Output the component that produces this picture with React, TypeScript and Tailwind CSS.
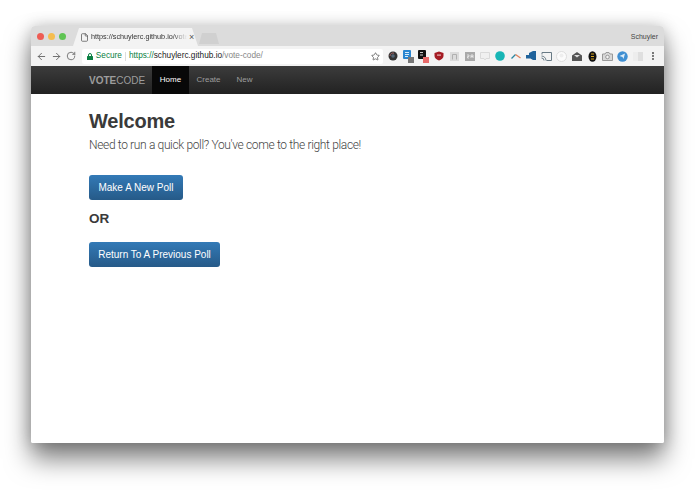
import { ArrowLeft, ArrowRight, RotateCw, Star, File, MoreVertical } from "lucide-react";

const sans = "font-['Liberation_Sans',Arial,sans-serif]";

const extensions = [
    <svg key="1" width="10" height="10" viewBox="0 0 10 10"><circle cx="5" cy="5" r="4.500" fill="#333" /><path d="M2 5a3 3 0 0 1 4-2.800" stroke="#a66" fill="none" /><circle cx="5" cy="5" r="1.800" fill="#567" /></svg>,
    <svg key="2" width="13" height="13" viewBox="0 0 13 13"><rect x="1" y="0" width="8" height="9" rx="1" fill="#2a86d1" /><path d="M3 2.500h4M3 4.500h4M3 6.500h3" stroke="#d8ecfa" /><rect x="6" y="7" width="6" height="6" fill="#777" /></svg>,
    <svg key="3" width="13" height="13" viewBox="0 0 13 13"><rect x="1" y="0" width="8" height="9" rx="1" fill="#111" /><path d="M3 2.500h3M3 5h3" stroke="#ccc" /><rect x="6" y="7" width="6" height="6" fill="#e86a6a" /></svg>,
    <svg key="4" width="10" height="10" viewBox="0 0 10 10"><path d="M5 .5 9.500 2v3c0 2.300-2.200 3.800-4.500 4.500C2.700 8.800.5 7.300.5 5V2z" fill="#a51c24" /><rect x="3" y="3.500" width="4" height="1.200" fill="#e8b5b5" /></svg>,
    <svg key="5" width="9" height="9" viewBox="0 0 9 9"><rect x="0" y="0" width="9" height="9" fill="#dcdcdc" /><path d="M2.500 7.500v-5h4v5" stroke="#b0b0b0" fill="none" /></svg>,
    <svg key="6" width="10" height="9" viewBox="0 0 10 9"><rect x="0" y="0" width="10" height="9" fill="#a9a9a9" /><path d="M2 3h2v1.500H2.500V6H4M6 6V3h2v3M6 4.500h2" stroke="#eee" strokeWidth=".8" fill="none" /></svg>,
    <svg key="7" width="10" height="9" viewBox="0 0 10 9"><path d="M.5 .5h9v6H6L5 8 4 6.500H.5z" fill="#f0f0f0" stroke="#dadada" /></svg>,
    <svg key="8" width="10" height="10" viewBox="0 0 10 10"><circle cx="5" cy="5" r="4.800" fill="#17b5b5" /></svg>,
    <svg key="9" width="10" height="8" viewBox="0 0 10 8"><path d="M.5 6.500 4.500 2.500" stroke="#2a86a1" strokeWidth="1.300" fill="none" /><path d="M4.500 2.500 9.500 6" stroke="#e0805a" strokeWidth="1.300" fill="none" /></svg>,
    <svg key="10" width="10" height="10" viewBox="0 0 10 10"><path d="M0 4h3V2l4-2h3v9H7L4.500 7.500H0z" fill="#20639b" /></svg>,
    <svg key="11" width="11" height="9" viewBox="0 0 11 9"><path d="M1 2.500V.5h9.500v8H5.500" stroke="#687a85" fill="none" /><path d="M.5 4a4.500 4.500 0 0 1 4.500 4.500M.5 6a2.500 2.500 0 0 1 2.500 2.500" stroke="#687a85" fill="none" /></svg>,
    <svg key="12" width="11" height="11" viewBox="0 0 11 11"><circle cx="5.500" cy="5.500" r="5" fill="#fbfbfb" stroke="#dddddd" /><circle cx="5.500" cy="4.500" r="2" fill="#eeeeee" /></svg>,
    <svg key="13" width="10" height="9" viewBox="0 0 10 9"><path d="M0 3.500 5 0l5 3.500V9H0z" fill="#555" /><path d="M2 3h6L5 5.500z" fill="#ddd" /></svg>,
    <svg key="14" width="9" height="11" viewBox="0 0 9 11"><ellipse cx="4.500" cy="5.500" rx="4" ry="5.200" fill="#111" /><path d="M3 3h3M3 5.500h3M3 8h3" stroke="#d9a520" /></svg>,
    <svg key="15" width="11" height="9" viewBox="0 0 11 9"><path d="M.5 2h2.500l1-1.500h3L8 2h2.500v6.500H.5z" fill="#d8d8d8" stroke="#999" /><circle cx="5.500" cy="5" r="1.800" fill="#f3f3f3" stroke="#999" /></svg>,
    <svg key="16" width="11" height="11" viewBox="0 0 11 11"><circle cx="5.500" cy="5.500" r="5.200" fill="#3f8fd2" /><path d="M2.500 5 8 2.500 6.500 8l-1-2z" fill="#dcecf8" /></svg>,
    <svg key="17" width="10" height="9" viewBox="0 0 10 9"><rect width="10" height="9" fill="#ededed" /><rect x="5" width="5" height="9" fill="#dfdfdf" /></svg>,
    <MoreVertical key="18" size={10} color="#555555" strokeWidth={3} />,
];

const App = () => {
    return (
        <div className={`h-[494px] w-[695px] overflow-hidden bg-white pl-[31px] pt-[26px] ${sans}`}>
            <div className="flex h-[417px] w-[633px] flex-col overflow-hidden rounded-t-[4px] rounded-b-[2px] bg-white shadow-[0_16px_26px_rgba(0,0,0,0.5),0_0_16px_rgba(0,0,0,0.2)]">
                {/* tab strip */}
                <div className="flex h-[20px] items-end bg-[#dcdcdc] pl-[6px]">
                    <div className="mr-[7px] flex h-[14px] items-center gap-[4px] self-center">
                        <span className="h-[7px] w-[7px] rounded-full bg-[#ee5c54]" />
                        <span className="h-[7px] w-[7px] rounded-full bg-[#f5bd4f]" />
                        <span className="h-[7px] w-[7px] rounded-full bg-[#5fc453]" />
                    </div>
                    <div className="flex h-[18px] w-[125px] items-center bg-[#f3f3f3] pl-[7px] [clip-path:polygon(0_100%,6px_0,119px_0,100%_100%)]">
                        <File size={9} color="#555555" />
                        <span className="ml-[2px] w-[96px] whitespace-nowrap text-[7.250px] leading-[10px] text-[#333333] [mask-image:linear-gradient(to_right,black_85%,transparent)]">https://schuylerc.github.io/vote</span>
                        <span className="ml-[2px] text-[9px] leading-none text-[#555555]">×</span>
                    </div>
                    <div className="mb-[2px] ml-[1px] h-[11px] w-[20px] bg-[#d0d0d0] [clip-path:polygon(0_100%,3px_0,17px_0,100%_100%)]" />
                    <span className="ml-auto mr-[6px] self-center text-[7px] leading-none text-[#444444]">Schuyler</span>
                </div>
                {/* toolbar */}
                <div className="flex h-[20px] items-center bg-[#f3f3f3] pl-[5px] pr-[3px]">
                    <div className="flex w-[46px] gap-[4px]">
                        <ArrowLeft size={11} color="#666666" />
                        <ArrowRight size={11} color="#666666" />
                        <RotateCw size={10} color="#666666" />
                    </div>
                    <div className="flex h-[15px] w-[302px] items-center rounded-[2px] bg-white pl-[5px] pr-[3px] text-[8.250px] leading-none">
                        <svg width="6" height="7" viewBox="0 0 6 7"><path d="M1.500 3V2a1.500 1.500 0 0 1 3 0v1" stroke="#0b8043" fill="none" /><rect y="3" width="6" height="4" rx=".5" fill="#0b8043" /></svg>
                        <span className="ml-[3px] text-[#0b8043]">Secure</span>
                        <span className="mx-[3px] h-[9px] w-px bg-[#dddddd]" />
                        <span className="text-[#0b8043]">https://</span>
                        <span className="text-[#222222]">schuylerc.github.io</span>
                        <span className="text-[#888888]">/vote-code/</span>
                        <Star size={9} color="#555555" className="ml-auto" />
                    </div>
                    <div className="flex flex-1 pl-[3px]">
                        {extensions.map((icon, index) => (
                            <span key={index} className="flex w-[15.3px] shrink-0 items-center justify-center">
                                {icon}
                            </span>
                        ))}
                    </div>
                </div>
                {/* navbar */}
                <div className="flex h-[28px] items-stretch bg-gradient-to-b from-[#3c3c3c] to-[#222222] pl-[58px]">
                    <span className="mr-[9px] flex w-[54px] items-center text-[10px] text-[#9d9d9d]">
                        <b>VOTE</b>CODE
                    </span>
                    <span className="flex w-[37px] items-center justify-center bg-[#080808] text-[8px] text-white">Home</span>
                    <span className="flex w-[39px] items-center justify-center text-[8px] text-[#9d9d9d]">Create</span>
                    <span className="flex w-[33px] items-center justify-center text-[8px] text-[#9d9d9d]">New</span>
                </div>
                {/* page */}
                <div className="flex-1 bg-white pl-[58px] pt-[14px] text-[#3a3a3a]">
                    <h1 className="text-[20px] font-bold leading-[26px] tracking-[-0.2px]">Welcome</h1>
                    <p className="mt-[3px] font-['Roboto',sans-serif] text-[12px] font-light leading-[16px] tracking-[-0.35px] text-[#444444]">Need to run a quick poll? You've come to the right place!</p>
                    <button className="mt-[22px] block h-[25px] w-[94px] rounded-[3px] bg-gradient-to-b from-[#337ab7] to-[#265a88] text-[10px] text-white">Make A New Poll</button>
                    <h4 className="mt-[10px] text-[13.500px] font-bold leading-[18px]">OR</h4>
                    <button className="mt-[14px] block h-[25px] w-[131px] rounded-[3px] bg-gradient-to-b from-[#337ab7] to-[#265a88] text-[10px] text-white">Return To A Previous Poll</button>
                </div>
            </div>
        </div>
    );
};

export default App;
